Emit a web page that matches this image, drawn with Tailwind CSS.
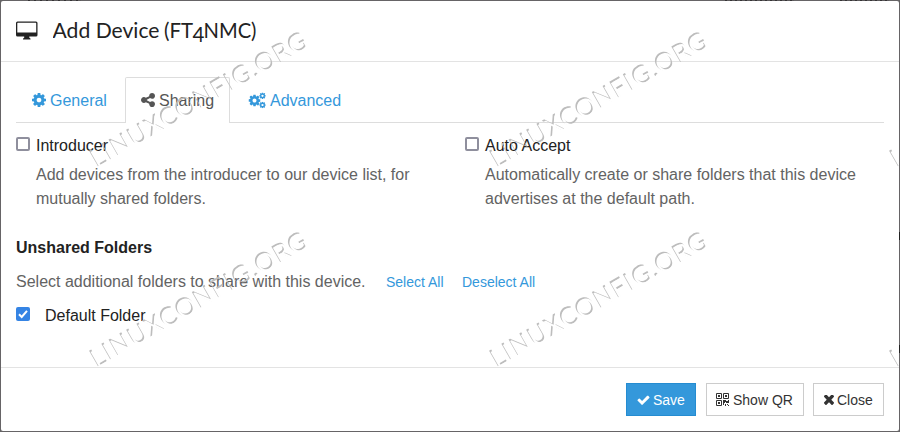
<!DOCTYPE html>
<html lang="en">
<head>
<meta charset="utf-8">
<title>Add Device</title>
<script src="https://cdn.jsdelivr.net/npm/@tailwindcss/browser@4"></script>
</head>
<body class="relative h-[432px] w-[900px] overflow-hidden bg-[#666466] p-px font-['Liberation_Sans',Arial,sans-serif] text-base leading-6 text-[#222]">
<svg class="hidden">
  <symbol id="cog" viewBox="128 128 1536 1536"><path d="M1152 896q0-106-75-181t-181-75-181 75-75 181 75 181 181 75 181-75 75-181zm512-109v222q0 12-8 23t-20 13l-185 28q-19 54-39 91 35 50 107 138 10 12 10 25t-9 23q-27 37-99 108t-94 71q-12 0-26-9l-138-108q-44 23-91 38-16 136-29 186-7 28-36 28h-222q-14 0-24.5-8.5t-11.5-21.5l-28-184q-49-16-90-37l-141 107q-10 9-25 9-14 0-25-11-126-114-165-168-7-10-7-23 0-12 8-23 15-21 51-66.5t54-70.5q-27-50-41-99l-183-27q-13-2-21-12.5t-8-23.5v-222q0-12 8-23t19-13l186-28q14-46 39-92-40-57-107-138-10-12-10-24 0-10 9-23 26-36 98.5-107.5t94.5-71.5q13 0 26 10l138 107q44-23 91-38 16-136 29-186 7-28 36-28h222q14 0 24.5 8.5t11.5 21.5l28 184q49 16 90 37l142-107q9-9 24-9 13 0 25 10 129 119 165 170 7 8 7 22 0 12-8 23-15 21-51 66.5t-54 70.5q26 50 41 98l183 28q13 2 21 12.5t8 23.5z"/></symbol>
</svg>
<div class="absolute left-[28px] top-0 h-px w-[53px] bg-[repeating-linear-gradient(90deg,#353335_0_2px,#5d5b5d_2px_6px)]"></div>
<div class="absolute left-[725px] top-0 h-px w-[69px] bg-[repeating-linear-gradient(90deg,#353335_0_2px,#5d5b5d_2px_5px)]"></div>
<div class="absolute left-[840px] top-0 h-px w-[49px] bg-[repeating-linear-gradient(90deg,#353335_0_2px,#5d5b5d_2px_5px)]"></div>
<div class="absolute left-[899px] top-[232px] h-[8px] w-px bg-[#222]"></div>
<div class="absolute left-[899px] top-[345px] h-[8px] w-px bg-[#222]"></div>

<main class="flex h-[430px] w-[898px] flex-col rounded-[2px] bg-white">
  <header class="flex h-[61px] shrink-0 items-center border-b border-[#e3e3e3] pl-[15px]">
    <svg class="-mt-[2px] h-[19px] w-[22px] fill-[#222]" viewBox="0 0 22 19"><path fill-rule="evenodd" d="M1.5 0.5H20Q21.5 .5 21.5 2V14Q21.5 15.5 20 15.5H13.3V16.8Q14.6 17 14.6 18.5H7Q7 17 8.2 16.8V15.5H1.5Q0 15.5 0 14V2Q0 .5 1.5 .5ZM1.3 2.2V11.5H20.2V2.2Q20.2 1.8 19.8 1.8H1.7Q1.3 1.8 1.3 2.2Z"/></svg>
    <svg class="ml-[15px] h-[30px] w-[206px] fill-[#222] font-['Lato',sans-serif] text-[20.5px]" viewBox="0 0 206 30"><text x="-0.5" y="22" textLength="107" lengthAdjust="spacingAndGlyphs">Add Device</text><text x="111" y="22" textLength="29" lengthAdjust="spacingAndGlyphs">(FT</text><text x="139.5" y="26">4</text><text x="150.5" y="22" textLength="53" lengthAdjust="spacingAndGlyphs">NMC)</text></svg>
  </header>

  <section class="flex-1 px-[15px] pt-[15px]">
    <nav class="flex h-[46px] border-b border-[#ddd] text-[#3498db]">
      <a class="flex w-[109px] items-center pl-4 pt-[2px]"><svg class="mr-1 -mt-px h-[14px] w-[14px] fill-current"><use href="#cog"/></svg>General</a>
      <a class="-mb-px flex w-[105px] items-center rounded-t-[2px] border border-b-0 border-[#ddd] bg-white pl-[15px] text-[#555]"><svg class="mr-1 -mt-px h-[14px] w-[14px] fill-current" viewBox="128 128 1536 1536"><path d="M1344 1024q133 0 226.5 93.5t93.5 226.5-93.5 226.5-226.5 93.5-226.5-93.5-93.5-226.5q0-12 2-34l-360-180q-92 86-218 86-133 0-226.5-93.5t-93.5-226.5 93.5-226.5 226.5-93.5q126 0 218 86l360-180q-2-22-2-34 0-133 93.5-226.5t226.5-93.5 226.5 93.5 93.5 226.5-93.5 226.5-226.5 93.5q-126 0-218-86l-360 180q2 22 2 34t-2 34l360 180q92-86 218-86z"/></svg>Sharing</a>
      <a class="flex items-center pl-[18px] pt-[2px]"><svg class="mr-1 -mt-px h-[17px] w-[18px] fill-current" viewBox="0 0 18 17"><use href="#cog" x="0.5" y="2.5" width="12" height="12"/><use href="#cog" x="11.2" y="0.5" width="6.6" height="6.6"/><use href="#cog" x="11.2" y="9.7" width="6.6" height="6.6"/></svg>Advanced</a>
    </nav>

    <div class="flex pt-[11px]">
      <div class="flex w-[449px]">
        <span class="mt-[3px] h-[14px] w-[14px] shrink-0 rounded-[2px] border-2 border-[#8f8f9d]"></span>
        <div class="pl-[6px]"><div>Introducer</div><p class="mt-[5px] text-[#636363]">Add devices from the introducer to our device list, for<br>mutually shared folders.</p></div>
      </div>
      <div class="flex">
        <span class="mt-[3px] h-[14px] w-[14px] shrink-0 rounded-[2px] border-2 border-[#8f8f9d]"></span>
        <div class="pl-[6px]"><div>Auto Accept</div><p class="mt-[5px] text-[#636363]">Automatically create or share folders that this device<br>advertises at the default path.</p></div>
      </div>
    </div>

    <h2 class="mt-[25px] font-bold">Unshared Folders</h2>
    <div class="mt-[10px] flex items-center text-[#636363]">
      <span class="w-[370px]">Select additional folders to share with this device.</span>
      <a class="w-[76px] text-sm text-[#3498db]">Select All</a>
      <a class="text-sm text-[#3498db]">Deselect All</a>
    </div>
    <div class="mt-[10px] flex">
      <svg class="mt-[3px] h-[14px] w-[14px]" viewBox="0 0 14 14"><rect width="14" height="14" rx="2" fill="#3584e4"/><path d="M3 7.3L5.7 10L11 3.8" fill="none" stroke="#fff" stroke-width="2"/></svg>
      <span class="pl-[15px]">Default Folder</span>
    </div>
  </section>

  <footer class="flex h-[64px] shrink-0 items-start justify-end border-t border-[#e3e3e3] pr-[15px] pt-[15px] text-sm text-[#333]">
    <button class="flex h-[33px] w-[70px] items-center border border-[#258cd1] bg-[#3498db] pl-[10px] text-white"><svg class="mr-[3px] h-[14px] w-[13px] fill-current" viewBox="60 0 1672 1792"><path d="M1671 566q0 40-28 68l-724 724-136 136q-28 28-68 28t-68-28l-136-136-362-362q-28-28-28-68t28-68l136-136q28-28 68-28t68 28l294 295 656-657q28-28 68-28t68 28l136 136q28 28 28 68z"/></svg>Save</button>
    <button class="ml-[10px] flex h-[33px] w-[98px] items-center border border-[#ccc] pl-[9px]"><svg class="mr-[4px] h-[13px] w-[13px] fill-none stroke-current" viewBox="0 0 13 13"><path d="M.5 .5h5v5h-5zM7.5 .5h5v5h-5zM.5 7.5h5v5h-5z"/><path class="fill-current stroke-none" d="M2 2h2v2h-2zM9 2h2v2h-2zM2 9h2v2h-2zM7 7h3v1h2v-1h1v3h-3v-1h-1v1h-1v2h-1zM9 11h1v1h-1zM9 12h1v1h-1zM11 11h1v1h-1zM12 12h1v1h-1z"/></svg>Show QR</button>
    <button class="ml-[9px] flex h-[33px] w-[71px] items-center border border-[#ccc] pl-[10px]"><svg class="mr-[3px] mt-px h-[10px] w-[10px] fill-current" viewBox="302 434 1188 1120" preserveAspectRatio="none"><path d="M1490 1322q0 40-28 68l-136 136q-28 28-68 28t-68-28l-294-294-294 294q-28 28-68 28t-68-28l-136-136q-28-28-28-68t28-68l294-294-294-294q-28-28-28-68t28-68l136-136q28-28 68-28t68 28l294 294 294-294q28-28 68-28t68 28l136 136q28 28 28 68t-28 68l-294 294 294 294q28 28 28 68z"/></svg>Close</button>
  </footer>
</main>

<svg class="pointer-events-none absolute left-0 top-0 h-[432px] w-[899px] font-['Lato',sans-serif] text-[25px]" viewBox="0 0 899 432">
  <defs>
    <mask id="emboss" maskUnits="userSpaceOnUse" x="0" y="0" width="400" height="220">
      <rect width="400" height="220" fill="#fff"/>
      <text transform="translate(97.5 168.8) rotate(-29.8)" textLength="245" fill="#000">LINUXCONFIG.ORG</text>
    </mask>
    <g id="mark"><g mask="url(#emboss)"><text transform="translate(96 167.5) rotate(-29.8)" textLength="245" fill="#bdbdbd">LINUXCONFIG.ORG</text></g></g>
  </defs>
  <use href="#mark"/><use href="#mark" x="400"/><use href="#mark" x="800"/>
  <use href="#mark" y="200"/><use href="#mark" x="400" y="200"/><use href="#mark" x="800" y="200"/>
</svg>
</body>
</html>
